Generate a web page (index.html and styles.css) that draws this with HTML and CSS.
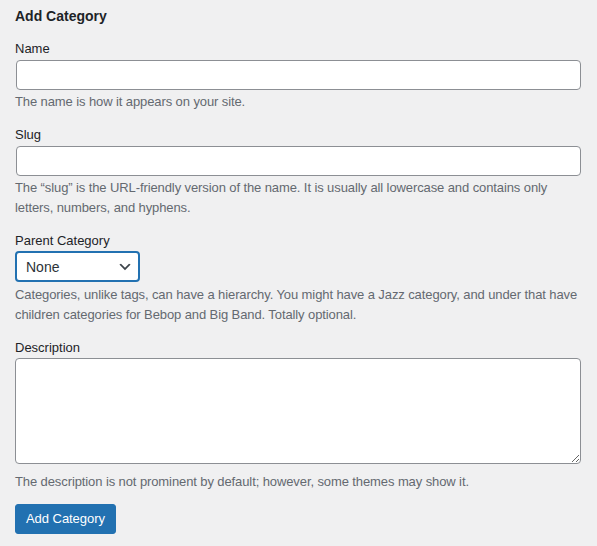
FILE: index.html
```html
<!DOCTYPE html>
<html lang="en">
<head>
<meta charset="utf-8">
<title>Add Category</title>
<link rel="stylesheet" href="styles.css">
</head>
<body>
<form class="add-form">
  <h2 class="title">Add Category</h2>
  <div class="field">
    <label class="label" for="tag-name">Name</label>
    <input class="text-input" id="tag-name" type="text">
    <p class="help">The name is how it appears on your site.</p>
  </div>
  <div class="field">
    <label class="label" for="tag-slug">Slug</label>
    <input class="text-input" id="tag-slug" type="text">
    <p class="help">The “slug” is the URL-friendly version of the name. It is usually all lowercase and contains only letters, numbers, and hyphens.</p>
  </div>
  <div class="field">
    <label class="label" for="parent">Parent Category</label>
    <span class="select-wrap">
      <select class="select" id="parent"><option>None</option></select>
      <svg class="chevron" width="16" height="16" viewBox="0 0 20 20" aria-hidden="true"><path d="M5 6l5 5 5-5 2 1-7 7-7-7 2-1z" fill="#3c434a"/></svg>
    </span>
    <p class="help help-parent">Categories, unlike tags, can have a hierarchy. You might have a Jazz category, and under that have children categories for Bebop and Big Band. Totally optional.</p>
  </div>
  <div class="field">
    <label class="label" for="desc">Description</label>
    <textarea class="textarea" id="desc"></textarea>
    <p class="help help-desc">The description is not prominent by default; however, some themes may show it.</p>
  </div>
  <button type="button" class="button">Add Category</button>
</form>
</body>
</html>
```
FILE: styles.css
```css
html, body {
  margin: 0;
  padding: 0;
  background: #f0f0f1;
}
body {
  font-family: "Liberation Sans", Arial, sans-serif;
  font-size: 13px;
  color: #1d2327;
}
.add-form {
  padding: 6px 15px 0 15px;
}
.title {
  margin: 0;
  font-size: 14px;
  font-weight: 700;
  line-height: 20px;
  color: #1d2327;
}
.field {
  margin-top: 13px;
}
.label {
  display: block;
  line-height: 19px;
  margin-bottom: 2px;
  color: #1d2327;
}
.text-input {
  display: block;
  box-sizing: border-box;
  width: calc(100% - 2px);
  margin: 0 1px;
  height: 30px;
  border: 1px solid #8c8f94;
  border-radius: 4px;
  background: #fff;
  padding: 0 8px;
  font: inherit;
}
.help {
  margin: 2px 0 0;
  line-height: 20px;
  color: #646970;
  letter-spacing: -0.1px;
}
.help-parent {
  margin-top: 3px;
}
.help-desc {
  margin-top: 8px;
}
.select-wrap {
  position: relative;
  display: block;
  width: 125px;
}
.select {
  display: block;
  box-sizing: border-box;
  width: 125px;
  height: 31px;
  margin-top: -1px;
  -webkit-appearance: none;
  appearance: none;
  border: 2px solid #2271b1;
  border-radius: 4px;
  background: #fff;
  padding: 0 24px 0 9px;
  font: inherit;
  font-size: 14px;
  color: #2c3338;
  outline: none;
}
.chevron {
  position: absolute;
  right: 7px;
  top: 8px;
  pointer-events: none;
}
.textarea {
  display: block;
  box-sizing: border-box;
  width: calc(100% - 1px);
  height: 106px;
  margin: -1px 0 0 0;
  border: 1px solid #8c8f94;
  border-radius: 4px;
  background: #fff;
  font: inherit;
  padding: 2px 6px;
}
.button {
  display: block;
  margin-top: 12px;
  box-sizing: border-box;
  height: 30px;
  padding: 0 10px;
  border: 1px solid #2271b1;
  border-radius: 3px;
  background: #2271b1;
  color: #fff;
  font: inherit;
  font-size: 13px;
  line-height: 28px;
  letter-spacing: -0.05px;
}
```
